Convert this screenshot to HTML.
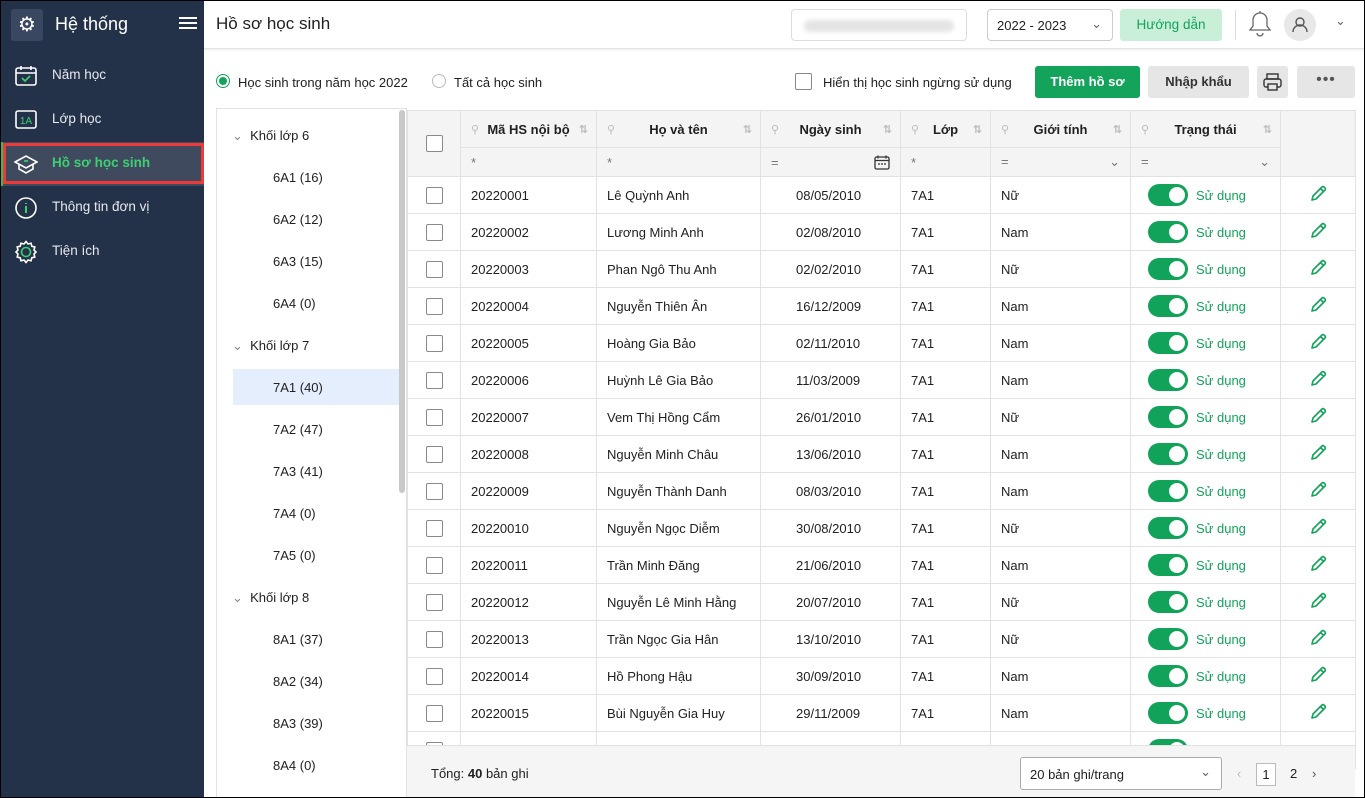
<!DOCTYPE html>
<html><head><meta charset="utf-8"><style>
*{box-sizing:border-box;margin:0;padding:0}
body{width:1365px;height:798px;overflow:hidden;font-family:"Liberation Sans","DejaVu Sans",sans-serif;font-size:13px;color:#212121;background:#fff;position:relative}
.abs{position:absolute}
#side{left:0;top:0;width:204px;height:798px;background:#243249}
.nav{position:absolute;left:0;width:204px;height:44px;color:#e6e9ee;font-size:13.5px}
.nav span{position:absolute;left:52px;top:13px}
.nav svg{position:absolute;left:14px;top:10px}
#top{left:204px;top:0;width:1161px;height:49px;background:#fff;border-bottom:1px solid #e3e3e3;box-shadow:0 1px 3px rgba(0,0,0,.08)}
table{border-collapse:collapse;table-layout:fixed;position:absolute;left:407px;top:110px;width:948px}
td,th{border:1px solid #e2e2e2;height:37px;padding:0 10px;white-space:nowrap;overflow:hidden}
th{background:#f4f4f4;font-weight:bold;font-size:13px;height:37px;position:relative}
tr.f td{background:#f4f4f4;height:29px;color:#777}
.cb{display:inline-block;width:17px;height:17px;border:1px solid #8a8a8a;border-radius:2px;background:#fff;vertical-align:middle}
.tg{display:inline-block;width:40px;height:22px;border-radius:11px;background:#12a35a;position:relative;vertical-align:middle}
.tg:after{content:"";position:absolute;right:3px;top:3px;width:16px;height:16px;border-radius:50%;background:#fff}
.st{color:#13a35a;margin-left:8px;vertical-align:middle}
.tree{position:absolute;left:273px;font-size:13px}
.grp{position:absolute;left:232px;font-size:13px}
.pin{position:absolute;left:10px;top:12px;color:#bbb;font-size:11px}
.srt{position:absolute;right:8px;top:12px;color:#bbb;font-size:11px}
.ed{text-align:center}
</style></head><body>
<svg width="0" height="0" style="position:absolute"><defs><symbol id="pen" viewBox="0 0 20 20"><path d="M4 16l1-4L14 3a1.4 1.4 0 0 1 2 0l1 1a1.4 1.4 0 0 1 0 2L8 15z M12.5 4.5l3 3" fill="none" stroke="#13a35a" stroke-width="1.6" stroke-linejoin="round"/></symbol></defs></svg>
<div id="side" class="abs">
 <div class="abs" style="left:11px;top:9px;width:32px;height:32px;background:#3a4760;border-radius:3px;color:#fff;font-size:20px;text-align:center;line-height:32px">⚙</div>
 <div class="abs" style="left:55px;top:14px;color:#fff;font-size:18px">Hệ thống</div>
 <div class="abs" style="left:179px;top:17px;width:18px;height:2px;background:#fff;box-shadow:0 5px 0 #fff,0 10px 0 #fff"></div>
 <div class="nav" style="top:54px"><svg width="24" height="24" viewBox="0 0 24 24" fill="none" stroke="#fff" stroke-width="1.6"><rect x="2" y="4" width="20" height="17" rx="2"/><path d="M2 9h20M7 2v4M17 2v4"/><path d="M8 14l3 3 5-5" stroke="#3ecf72"/></svg><span>Năm học</span></div>
 <div class="nav" style="top:98px"><svg width="24" height="24" viewBox="0 0 24 24"><rect x="2" y="3" width="20" height="17" rx="2" fill="none" stroke="#fff" stroke-width="1.6"/><text x="12" y="16" font-size="10" fill="#3ecf72" text-anchor="middle" font-family="Liberation Sans">1A</text></svg><span>Lớp học</span></div>
 <div class="abs" style="left:0;top:142px;width:204px;height:44px;background:#3f4a5e;border-left:3px solid #2fbf63"></div>
 <div class="abs" style="left:3px;top:143px;width:201px;height:41px;border:3px solid #ef3a3a"></div>
 <div class="nav" style="top:142px"><svg width="24" height="24" viewBox="0 0 24 24" fill="none" stroke="#fff" stroke-width="1.6"><path d="M1 10l11-6 11 6-11 6z"/><path d="M5 12v5l7 4 7-4v-5"/><path d="M10 9h4" stroke="#3ecf72"/></svg><span style="color:#3ecf72;font-weight:bold">Hồ sơ học sinh</span></div>
 <div class="nav" style="top:186px"><svg width="24" height="24" viewBox="0 0 24 24" fill="none" stroke="#fff" stroke-width="1.6"><circle cx="12" cy="12" r="10"/><path d="M12 10v7M12 7v1" stroke="#3ecf72" stroke-width="2"/></svg><span>Thông tin đơn vị</span></div>
 <div class="nav" style="top:230px"><svg width="24" height="24" viewBox="0 0 24 24" fill="none" stroke="#fff" stroke-width="1.6"><path d="M12 1.5l2 2.5 3-.8.8 3 3 .9-.8 3L22 12l-2 2 .8 3-3 .8-.8 3-3-.8-2 2.5-2-2.5-3 .8-.8-3-3-.8.8-3L2 12l2-2-.8-3 3-.8.8-3 3 .8z"/><circle cx="12" cy="12" r="4.5" stroke="#3ecf72"/></svg><span>Tiện ích</span></div>
</div>
<div id="top" class="abs">
 <div class="abs" style="left:12px;top:14px;font-size:17px;color:#212121">Hồ sơ học sinh</div>
 <div class="abs" style="left:587px;top:9px;width:176px;height:32px;border:1px solid #ddd;border-radius:4px"><div style="margin:10px 12px;height:12px;background:#e4e4e4;border-radius:6px;filter:blur(2px)"></div></div>
 <div class="abs" style="left:783px;top:9px;width:126px;height:32px;border:1px solid #ccc;border-radius:4px;padding:8px 9px">2022 - 2023<span style="position:absolute;right:10px;top:6px;color:#666">⌄</span></div>
 <div class="abs" style="left:916px;top:9px;width:102px;height:32px;background:#c9efd9;border-radius:3px;color:#13a35a;text-align:center;line-height:32px;font-size:13.5px">Hướng dẫn</div>
 <div class="abs" style="left:1031px;top:10px;width:1px;height:30px;background:#ddd"></div>
 <svg class="abs" style="left:1044px;top:10px" width="24" height="28" viewBox="0 0 24 28" fill="none" stroke="#666" stroke-width="1.3"><path d="M12 3a7 7 0 0 0-7 7v6l-3 4h20l-3-4v-6a7 7 0 0 0-7-7zM12 1v2M9 23a3 3 0 0 0 6 0"/></svg>
 <div class="abs" style="left:1080px;top:9px;width:32px;height:32px;border-radius:50%;background:#e8e8e8"><svg width="32" height="32" viewBox="0 0 32 32" fill="none" stroke="#555" stroke-width="1.4"><circle cx="16" cy="13" r="4"/><path d="M9 23a7 7 0 0 1 14 0"/></svg></div>
 <div class="abs" style="left:1131px;top:13px;color:#666">⌄</div>
</div>
<div class="abs" style="left:216px;top:74px;width:14px;height:14px;border-radius:50%;border:1px solid #13a35a"><div style="margin:2px;width:8px;height:8px;border-radius:50%;background:#13a35a"></div></div>
<div class="abs" style="left:238px;top:75px">Học sinh trong năm học 2022</div>
<div class="abs" style="left:432px;top:74px;width:14px;height:14px;border-radius:50%;border:1px solid #bbb"></div>
<div class="abs" style="left:454px;top:75px">Tất cả học sinh</div>
<div class="abs" style="left:795px;top:73px;width:17px;height:17px;border:1px solid #888;border-radius:2px"></div>
<div class="abs" style="left:823px;top:75px">Hiển thị học sinh ngừng sử dụng</div>
<div class="abs" style="left:1035px;top:66px;width:105px;height:32px;background:#13a35a;border-radius:3px;color:#fff;font-weight:bold;text-align:center;line-height:32px">Thêm hồ sơ</div>
<div class="abs" style="left:1148px;top:66px;width:101px;height:32px;background:#e6e6e6;border-radius:3px;text-align:center;line-height:32px;font-weight:bold;color:#333">Nhập khẩu</div>
<div class="abs" style="left:1257px;top:66px;width:31px;height:32px;background:#e6e6e6;border-radius:3px"><svg width="31" height="32" viewBox="0 0 31 32" fill="none" stroke="#333" stroke-width="1.4"><rect x="10" y="8" width="11" height="5"/><rect x="7" y="13" width="17" height="8" rx="2"/><rect x="11" y="18" width="9" height="6" fill="#e6e6e6"/></svg></div>
<div class="abs" style="left:1297px;top:66px;width:58px;height:32px;background:#e6e6e6;border-radius:3px;text-align:center;line-height:28px;color:#555;font-size:16px;letter-spacing:1px">•••</div>
<div class="abs" style="left:216px;top:108px;width:191px;height:690px;border:1px solid #e2e2e2;border-bottom:none"></div>
<div class="abs" style="left:399px;top:110px;width:6px;height:383px;background:#c8c8c8;border-radius:3px"></div>
<div class="abs" style="left:233px;top:369px;width:166px;height:36px;background:#e4eefc"></div>
<div class="grp" style="top:128px"><span style="color:#888">⌄</span>&nbsp; Khối lớp 6</div>
<div class="tree" style="top:170px">6A1 (16)</div><div class="tree" style="top:212px">6A2 (12)</div><div class="tree" style="top:254px">6A3 (15)</div><div class="tree" style="top:296px">6A4 (0)</div>
<div class="grp" style="top:338px"><span style="color:#888">⌄</span>&nbsp; Khối lớp 7</div>
<div class="tree" style="top:380px">7A1 (40)</div><div class="tree" style="top:422px">7A2 (47)</div><div class="tree" style="top:464px">7A3 (41)</div><div class="tree" style="top:506px">7A4 (0)</div><div class="tree" style="top:548px">7A5 (0)</div>
<div class="grp" style="top:590px"><span style="color:#888">⌄</span>&nbsp; Khối lớp 8</div>
<div class="tree" style="top:632px">8A1 (37)</div><div class="tree" style="top:674px">8A2 (34)</div><div class="tree" style="top:716px">8A3 (39)</div><div class="tree" style="top:758px">8A4 (0)</div>
<table>
<colgroup><col style="width:53px"><col style="width:136px"><col style="width:164px"><col style="width:140px"><col style="width:90px"><col style="width:140px"><col style="width:150px"><col style="width:75px"></colgroup>
<tr><th rowspan="2" style="text-align:center;background:#f4f4f4"><span class="cb"></span></th><th><span class="pin">⚲</span>Mã HS nội bộ<span class="srt">⇅</span></th><th><span class="pin">⚲</span>Họ và tên<span class="srt">⇅</span></th><th><span class="pin">⚲</span>Ngày sinh<span class="srt">⇅</span></th><th><span class="pin">⚲</span>Lớp<span class="srt">⇅</span></th><th><span class="pin">⚲</span>Giới tính<span class="srt">⇅</span></th><th><span class="pin">⚲</span>Trạng thái<span class="srt">⇅</span></th><th rowspan="2"></th></tr>
<tr class="f"><td>*</td><td>*</td><td>=<svg style="float:right" width="16" height="15" viewBox="0 0 16 15" fill="none" stroke="#333" stroke-width="1.3"><rect x="1" y="2" width="14" height="12" rx="1.5"/><path d="M1 5.5h14M4 0.5v3M12 0.5v3M4 9h2M7 9h2M10 9h2"/></svg></td><td>*</td><td>=<span style="float:right">⌄</span></td><td>=<span style="float:right">⌄</span></td></tr>
<tr><td style="text-align:center"><span class="cb"></span></td><td>20220001</td><td>Lê Quỳnh Anh</td><td style="padding-left:35px">08/05/2010</td><td>7A1</td><td>Nữ</td><td style="padding-left:17px"><span class="tg"></span><span class="st">Sử dụng</span></td><td class="ed"><svg width="20" height="20"><use href="#pen"/></svg></td></tr>
<tr><td style="text-align:center"><span class="cb"></span></td><td>20220002</td><td>Lương Minh Anh</td><td style="padding-left:35px">02/08/2010</td><td>7A1</td><td>Nam</td><td style="padding-left:17px"><span class="tg"></span><span class="st">Sử dụng</span></td><td class="ed"><svg width="20" height="20"><use href="#pen"/></svg></td></tr>
<tr><td style="text-align:center"><span class="cb"></span></td><td>20220003</td><td>Phan Ngô Thu Anh</td><td style="padding-left:35px">02/02/2010</td><td>7A1</td><td>Nữ</td><td style="padding-left:17px"><span class="tg"></span><span class="st">Sử dụng</span></td><td class="ed"><svg width="20" height="20"><use href="#pen"/></svg></td></tr>
<tr><td style="text-align:center"><span class="cb"></span></td><td>20220004</td><td>Nguyễn Thiên Ân</td><td style="padding-left:35px">16/12/2009</td><td>7A1</td><td>Nam</td><td style="padding-left:17px"><span class="tg"></span><span class="st">Sử dụng</span></td><td class="ed"><svg width="20" height="20"><use href="#pen"/></svg></td></tr>
<tr><td style="text-align:center"><span class="cb"></span></td><td>20220005</td><td>Hoàng Gia Bảo</td><td style="padding-left:35px">02/11/2010</td><td>7A1</td><td>Nam</td><td style="padding-left:17px"><span class="tg"></span><span class="st">Sử dụng</span></td><td class="ed"><svg width="20" height="20"><use href="#pen"/></svg></td></tr>
<tr><td style="text-align:center"><span class="cb"></span></td><td>20220006</td><td>Huỳnh Lê Gia Bảo</td><td style="padding-left:35px">11/03/2009</td><td>7A1</td><td>Nam</td><td style="padding-left:17px"><span class="tg"></span><span class="st">Sử dụng</span></td><td class="ed"><svg width="20" height="20"><use href="#pen"/></svg></td></tr>
<tr><td style="text-align:center"><span class="cb"></span></td><td>20220007</td><td>Vem Thị Hồng Cẩm</td><td style="padding-left:35px">26/01/2010</td><td>7A1</td><td>Nữ</td><td style="padding-left:17px"><span class="tg"></span><span class="st">Sử dụng</span></td><td class="ed"><svg width="20" height="20"><use href="#pen"/></svg></td></tr>
<tr><td style="text-align:center"><span class="cb"></span></td><td>20220008</td><td>Nguyễn Minh Châu</td><td style="padding-left:35px">13/06/2010</td><td>7A1</td><td>Nam</td><td style="padding-left:17px"><span class="tg"></span><span class="st">Sử dụng</span></td><td class="ed"><svg width="20" height="20"><use href="#pen"/></svg></td></tr>
<tr><td style="text-align:center"><span class="cb"></span></td><td>20220009</td><td>Nguyễn Thành Danh</td><td style="padding-left:35px">08/03/2010</td><td>7A1</td><td>Nam</td><td style="padding-left:17px"><span class="tg"></span><span class="st">Sử dụng</span></td><td class="ed"><svg width="20" height="20"><use href="#pen"/></svg></td></tr>
<tr><td style="text-align:center"><span class="cb"></span></td><td>20220010</td><td>Nguyễn Ngọc Diễm</td><td style="padding-left:35px">30/08/2010</td><td>7A1</td><td>Nữ</td><td style="padding-left:17px"><span class="tg"></span><span class="st">Sử dụng</span></td><td class="ed"><svg width="20" height="20"><use href="#pen"/></svg></td></tr>
<tr><td style="text-align:center"><span class="cb"></span></td><td>20220011</td><td>Trần Minh Đăng</td><td style="padding-left:35px">21/06/2010</td><td>7A1</td><td>Nam</td><td style="padding-left:17px"><span class="tg"></span><span class="st">Sử dụng</span></td><td class="ed"><svg width="20" height="20"><use href="#pen"/></svg></td></tr>
<tr><td style="text-align:center"><span class="cb"></span></td><td>20220012</td><td>Nguyễn Lê Minh Hằng</td><td style="padding-left:35px">20/07/2010</td><td>7A1</td><td>Nữ</td><td style="padding-left:17px"><span class="tg"></span><span class="st">Sử dụng</span></td><td class="ed"><svg width="20" height="20"><use href="#pen"/></svg></td></tr>
<tr><td style="text-align:center"><span class="cb"></span></td><td>20220013</td><td>Trần Ngọc Gia Hân</td><td style="padding-left:35px">13/10/2010</td><td>7A1</td><td>Nữ</td><td style="padding-left:17px"><span class="tg"></span><span class="st">Sử dụng</span></td><td class="ed"><svg width="20" height="20"><use href="#pen"/></svg></td></tr>
<tr><td style="text-align:center"><span class="cb"></span></td><td>20220014</td><td>Hồ Phong Hậu</td><td style="padding-left:35px">30/09/2010</td><td>7A1</td><td>Nam</td><td style="padding-left:17px"><span class="tg"></span><span class="st">Sử dụng</span></td><td class="ed"><svg width="20" height="20"><use href="#pen"/></svg></td></tr>
<tr><td style="text-align:center"><span class="cb"></span></td><td>20220015</td><td>Bùi Nguyễn Gia Huy</td><td style="padding-left:35px">29/11/2009</td><td>7A1</td><td>Nam</td><td style="padding-left:17px"><span class="tg"></span><span class="st">Sử dụng</span></td><td class="ed"><svg width="20" height="20"><use href="#pen"/></svg></td></tr>
<tr><td style="text-align:center"><span class="cb"></span></td><td></td><td></td><td></td><td></td><td></td><td style="padding-left:17px"><span class="tg"></span></td><td></td></tr>
</table>
<div class="abs" style="left:407px;top:745px;width:948px;height:53px;background:#f5f5f5;border-top:1px solid #e2e2e2"></div>
<div class="abs" style="left:431px;top:766px">Tổng: <b>40</b> bản ghi</div>
<div class="abs" style="left:1020px;top:757px;width:202px;height:33px;border:1px solid #aaa;border-radius:3px;background:#fff;padding:9px 9px">20 bản ghi/trang<span style="position:absolute;right:10px;top:6px;color:#666">⌄</span></div>
<div class="abs" style="left:1237px;top:766px;color:#bbb">‹</div>
<div class="abs" style="left:1256px;top:763px;width:20px;height:23px;border:1px solid #bbb;text-align:center;line-height:21px;background:#fff">1</div>
<div class="abs" style="left:1290px;top:766px">2</div>
<div class="abs" style="left:1312px;top:766px;color:#555">›</div>
<div class="abs" style="left:0;top:0;width:1365px;height:798px;border:1px solid #000;pointer-events:none"></div>
</body></html>
